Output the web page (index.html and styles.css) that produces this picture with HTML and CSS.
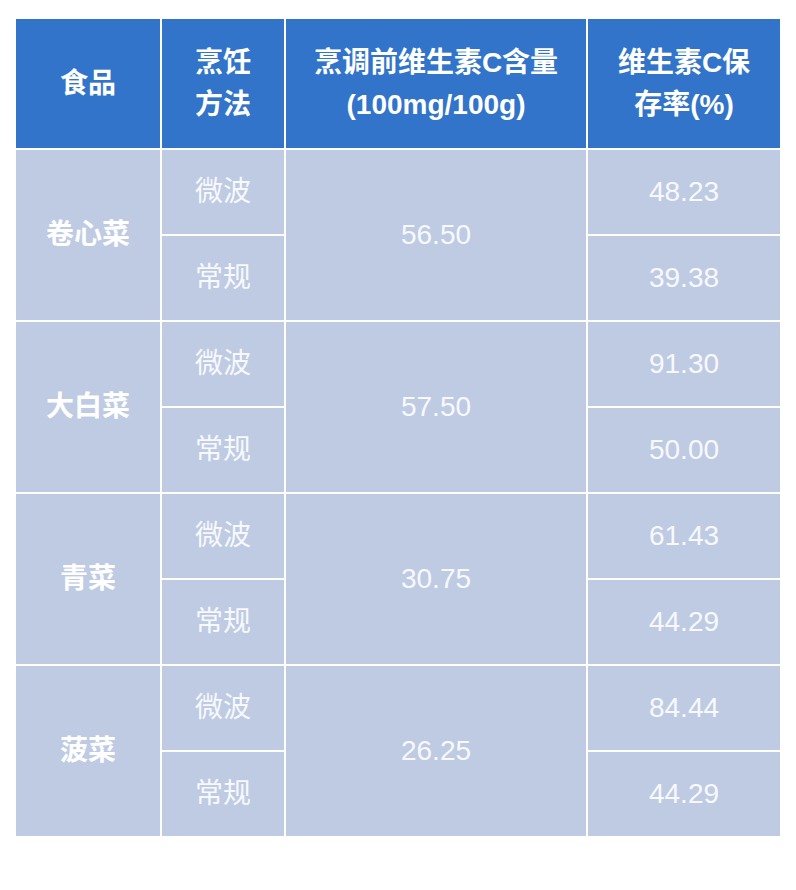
FILE: index.html
```html
<!DOCTYPE html>
<html lang="zh">
<head>
<meta charset="utf-8">
<link rel="stylesheet" href="styles.css">
</head>
<body>
<div class="wrap">
<table class="vc">
<colgroup>
<col class="c1"><col class="c2"><col class="c3"><col class="c4">
</colgroup>
<thead>
<tr>
<th>食品</th>
<th>烹饪<br>方法</th>
<th>烹调前维生素C含量<br>(100mg/100g)</th>
<th>维生素C保<br>存率(%)</th>
</tr>
</thead>
<tbody>
<tr><td rowspan="2" class="food">卷心菜</td><td>微波</td><td rowspan="2">56.50</td><td>48.23</td></tr>
<tr><td>常规</td><td>39.38</td></tr>
<tr><td rowspan="2" class="food">大白菜</td><td>微波</td><td rowspan="2">57.50</td><td>91.30</td></tr>
<tr><td>常规</td><td>50.00</td></tr>
<tr><td rowspan="2" class="food">青菜</td><td>微波</td><td rowspan="2">30.75</td><td>61.43</td></tr>
<tr><td>常规</td><td>44.29</td></tr>
<tr><td rowspan="2" class="food">菠菜</td><td>微波</td><td rowspan="2">26.25</td><td>84.44</td></tr>
<tr><td>常规</td><td>44.29</td></tr>
</tbody>
</table>
</div>
</body>
</html>
```
FILE: styles.css
```css
html, body {
  margin: 0;
  padding: 0;
  background: #ffffff;
}
.wrap {
  padding: 17px 0 0 14px;
}
.vc {
  border-collapse: separate;
  border-spacing: 2px;
  table-layout: fixed;
  width: 768px;
  font-family: "Liberation Sans", "Noto Sans CJK SC", sans-serif;
  font-size: 28px;
  color: #ffffff;
}
.c1 { width: 144px; }
.c2 { width: 122px; }
.c3 { width: 300px; }
.c4 { width: 192px; }
.vc th, .vc td {
  padding: 0;
  text-align: center;
  vertical-align: middle;
  line-height: 42px;
}
.vc th {
  background: #3174c9;
  height: 129px;
  font-weight: 700;
  font-size: 28px;
}
.vc td {
  background: #bfcbe3;
  height: 84px;
  font-weight: 400;
  color: #f7f9fc;
}
.vc td.food {
  font-weight: 700;
  color: #ffffff;
}
```
